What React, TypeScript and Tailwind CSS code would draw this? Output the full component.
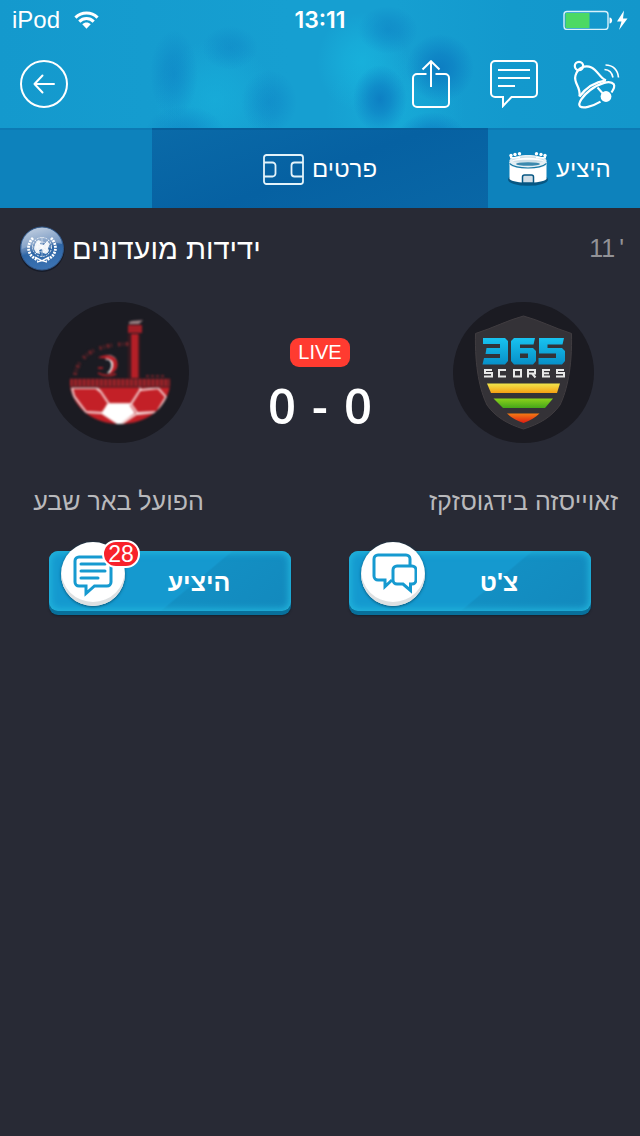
import type { ReactNode } from "react";

const SANS = "font-['Liberation_Sans',Arial,sans-serif]";

const BLOBS = [
  { cx: 215, cy: 100, rx: 60, ry: 60, fill: "url(#light)", opacity: 0.7 },
  { cx: 362, cy: 62, rx: 45, ry: 50, fill: "url(#light)", opacity: 1 },
  { cx: 395, cy: 110, rx: 70, ry: 60, fill: "url(#light)", opacity: 0.6 },
  { cx: 174, cy: 74, rx: 24, ry: 44, fill: "url(#dark)", opacity: 0.45 },
  { cx: 230, cy: 48, rx: 28, ry: 22, fill: "url(#dark)", opacity: 0.35 },
  { cx: 269, cy: 102, rx: 28, ry: 32, fill: "url(#dark)", opacity: 0.4 },
  { cx: 185, cy: 132, rx: 40, ry: 26, fill: "url(#dark)", opacity: 0.45 },
  { cx: 388, cy: 30, rx: 30, ry: 24, fill: "url(#dark)", opacity: 0.45 },
  { cx: 380, cy: 99, rx: 27, ry: 34, fill: "url(#dark)", opacity: 0.85 },
  { cx: 440, cy: 68, rx: 34, ry: 34, fill: "url(#dark)", opacity: 0.85 },
  { cx: 432, cy: 138, rx: 34, ry: 26, fill: "url(#dark)", opacity: 0.8 },
];

function HeaderBackdrop() {
  return (
    <svg
      aria-hidden="true"
      className="absolute inset-0 h-full w-full"
      viewBox="0 0 640 208"
      preserveAspectRatio="none"
    >
      <defs>
        <linearGradient id="sky" x1="0" x2="1" y1="0" y2="0">
          <stop offset="0" stopColor="#1499cd" />
          <stop offset="0.45" stopColor="#169fd1" />
          <stop offset="0.62" stopColor="#169fd1" />
          <stop offset="0.8" stopColor="#1399cd" />
          <stop offset="1" stopColor="#1397cb" />
        </linearGradient>
        <radialGradient id="light">
          <stop offset="0" stopColor="#18b0db" />
          <stop offset="0.4" stopColor="#18b0db" stopOpacity="0.7" />
          <stop offset="1" stopColor="#18b0db" stopOpacity="0" />
        </radialGradient>
        <radialGradient id="dark">
          <stop offset="0" stopColor="#0b78c0" />
          <stop offset="0.4" stopColor="#0b78c0" stopOpacity="0.7" />
          <stop offset="1" stopColor="#0b78c0" stopOpacity="0" />
        </radialGradient>
      </defs>
      <rect width="640" height="208" fill="url(#sky)" />
      {BLOBS.map((blob) => (
        <ellipse key={`${blob.cx}-${blob.cy}`} {...blob} />
      ))}
    </svg>
  );
}

function StatusBar() {
  return (
    <div className="relative grid h-10 grid-cols-3 items-center px-3 leading-6 text-white">
      <div className="flex items-center gap-3.5">
        <span className="text-[24px]">iPod</span>
        <svg className="h-[18px] w-[25px]" viewBox="0 0 26 18" aria-label="Wi-Fi">
          <g fill="none" stroke="#fff" strokeWidth="3.2">
            <path d="M1.5 6.5C8 .2 18 .2 24.500 6.5" />
            <path d="M5.5 10.6c4.2-4.1 10.800-4.100 15 0" />
          </g>
          <path d="M8.600 13.400c2.500-2.400 6.300-2.400 8.800 0L13 18z" fill="#fff" />
        </svg>
      </div>
      <time className="text-center font-['Inter','Liberation_Sans',sans-serif] text-[23px] font-semibold">
        13:11
      </time>
      <svg className="h-5 w-[65px] justify-self-end" viewBox="0 0 65 20" aria-label="Battery, charging">
        <rect x="1" y="1.500" width="44" height="18" rx="3" fill="none" stroke="#d9f1fb" strokeWidth="1.400" />
        <rect x="2.500" y="3" width="24" height="15" fill="#4cd964" />
        <path d="M46.500 7.500c3.500 0 3.500 6 0 6z" fill="#fff" />
        <path d="M61 .5 54 11.500h4.500L56 20 64.500 8.500H60z" fill="#fff" />
      </svg>
    </div>
  );
}

function BackIcon() {
  return (
    <svg className="size-12" viewBox="0 0 48 48" fill="none" stroke="#fff" strokeWidth="2" aria-hidden="true">
      <circle cx="24" cy="24" r="23" />
      <path d="M14.500 24H34M22.500 15.500 14.500 24l8 8.500" strokeLinecap="round" strokeLinejoin="round" />
    </svg>
  );
}

function ShareIcon() {
  return (
    <svg className="h-12 w-[38px]" viewBox="0 0 38 48" fill="none" stroke="#fff" strokeWidth="2" aria-hidden="true">
      <path d="M14.500 14H5a4 4 0 0 0-4 4v25a4 4 0 0 0 4 4h28a4 4 0 0 0 4-4V18a4 4 0 0 0-4-4h-9.500" />
      <path d="M19 27V1.500M10.500 9.500 19 1.200l8.500 8.300" />
    </svg>
  );
}

function CommentIcon() {
  return (
    <svg className="size-12" viewBox="0 0 48 48" fill="none" stroke="#fff" strokeWidth="2" aria-hidden="true">
      <path d="M5 1h38a4 4 0 0 1 4 4v28a4 4 0 0 1-4 4H21.500L13 46v-9H5a4 4 0 0 1-4-4V5a4 4 0 0 1 4-4z" />
      <path d="M8 10h32M8 18h32M8 26h17" />
    </svg>
  );
}

function BellIcon() {
  return (
    <svg
      className="h-12 w-[42px] overflow-visible"
      viewBox="5 0 42 48"
      fill="none"
      stroke="#fff"
      strokeWidth="2.200"
      aria-hidden="true"
    >
      <circle cx="6" cy="6" r="4.200" />
      <path d="M6.500 36.500C8 26 .2 23.500 2.500 15.500 4.500 8 12 4.500 18.500 7.500c6.500 3 8 10.500 14.500 12.800" />
      <path d="M6.500 36.500C13 27.500 21.500 22 33 20.300" />
      <path d="M38.500 32.500c2.300-3.500 3.500-6.300 2.300-8.200-3.500-4.500-14.300-1.200-23.500 5.700C9.500 36 4.500 43.500 7 46.300c2.700 2.300 11.500.7 20.500-4.700" />
      <path d="M24.500 27.500 32 36" strokeWidth="2" />
      <circle cx="33" cy="36.500" r="5.400" fill="#fff" stroke="none" />
      <path d="M31.500 9.500c4.500.2 7.500 3 8.500 8" strokeWidth="1.600" />
      <path d="M32.500 5c7.500 0 12.300 5 13 12.500" strokeWidth="1.600" />
    </svg>
  );
}

function PitchIcon() {
  return (
    <svg className="h-[31px] w-[41px]" viewBox="0 0 41 31" fill="none" stroke="#e3f3fa" strokeWidth="1.800" aria-hidden="true">
      <rect x="1" y="1" width="39" height="29" rx="2.500" />
      <path d="M1 8.500h8.500a3 3 0 0 1 3 3v8a3 3 0 0 1-3 3H1M40 8.500h-8.500a3 3 0 0 0-3 3v8a3 3 0 0 0 3 3H40" />
    </svg>
  );
}

function StadiumIcon() {
  return (
    <svg className="h-[34px] w-10" viewBox="0 0 40 34" aria-hidden="true">
      <ellipse cx="20" cy="27.500" rx="20" ry="6.300" fill="#075783" />
      <path d="M1.500 10v17C6 32 34 32 38.500 27V10z" fill="#fff" />
      <path d="M1.500 8C4 4.500 13 3 20 3s16 1.500 18.500 5v5C34 18 6 18 1.500 13z" fill="#e5eff4" />
      <ellipse cx="20" cy="8" rx="16" ry="3.500" fill="#cfe0e8" />
      <path d="M3 9.500c7-5 27-5 34 0-7-2.500-27-2.500-34 0z" fill="#fff" />
      <ellipse cx="20" cy="12" rx="12" ry="1.800" fill="#3b89ae" />
      <path d="M1.500 11.500c7 6 30 6 37 0" fill="none" stroke="#1678a4" strokeWidth="1.200" />
      <path d="M14.500 31v-6a2 2 0 0 1 2-2h7a2 2 0 0 1 2 2v6z" fill="#d3dee6" stroke="#075783" strokeWidth="1.500" />
      <g fill="#fff">
        <circle cx="3" cy="3.500" r="1.700" />
        <circle cx="7" cy="2.500" r="1.700" />
        <circle cx="11.500" cy="1.800" r="1.700" />
        <circle cx="28.500" cy="1.800" r="1.700" />
        <circle cx="33" cy="2.500" r="1.700" />
        <circle cx="37" cy="3.500" r="1.700" />
        <path d="M2 5h10v1.500H2zM28 5h10v1.500H28z" />
      </g>
    </svg>
  );
}

function UnEmblem() {
  return (
    <svg className="size-[46px]" viewBox="0 0 46 46" aria-hidden="true">
      <defs>
        <linearGradient id="un" x1="0.300" x2="0.600" y1="0" y2="1">
          <stop offset="0" stopColor="#b7c6da" />
          <stop offset="0.450" stopColor="#5b83b5" />
          <stop offset="0.550" stopColor="#2e66a6" />
          <stop offset="1" stopColor="#3c74b4" />
        </linearGradient>
      </defs>
      <circle cx="23" cy="23.500" r="22.500" fill="#171b28" />
      <circle cx="23" cy="22.500" r="21.500" fill="url(#un)" stroke="#31588a" />
      <path d="M3 17C7 4 21-1 31 3c7 3 11 9 12 15-13-4-26-1-40 5z" fill="#dfe9f5" opacity="0.250" />
      <g fill="none" stroke="#fff">
        <path d="M14 12c-7 7-6 18 5 22M32 12c7 7 6 18-5 22" strokeWidth="2.800" strokeDasharray="2 1" />
        <path d="M18 36c5-1 9-3 12-5M28 36c-5-1-9-3-12-5" strokeWidth="1.500" />
        <circle cx="23" cy="21" r="9.500" strokeWidth="0.800" strokeDasharray="2 1" />
        <circle cx="23" cy="21" r="5" strokeWidth="0.600" />
        <path d="M23 11v20M13 21h20M16 14l14 14M30 14 16 28" strokeWidth="0.500" />
      </g>
      <path d="m16 18 3-4 3 1-1 3 4 1 3-4 3 3-2 4 1 3-3 3-3-1-1-4-3 1 1 4-4-1-2-4z" fill="#fff" opacity="0.900" />
    </svg>
  );
}

function BeerShevaCrest() {
  return (
    <svg className="size-[141px]" viewBox="0 0 141 141" role="img" aria-label="הפועל באר שבע">
      <defs>
        <clipPath id="bowl">
          <path d="M22 84h100c-4 23-24 38-50 38S26 107 22 84z" />
        </clipPath>
        <filter id="crestSoft" colorInterpolationFilters="sRGB">
          <feGaussianBlur stdDeviation="0.900" />
        </filter>
      </defs>
      <circle cx="70.500" cy="70.500" r="70.500" fill="#1b1b22" />
      <g filter="url(#crestSoft)">
        <g clipPath="url(#bowl)">
          <rect x="20" y="84" width="104" height="40" fill="#c32027" />
          <path
            d="M24 86h24l5 4 8 12-7 9-16-1-12-16zM53 90l-4-4M61 102h22l9-14 18-2 8 9-9 15-19 2-7-10M38 110l16 1 18 12 18-12 20-1M93 88l-2-4"
            fill="none"
            stroke="#f5dcdc"
            strokeWidth="1.800"
          />
          <path d="M59 102h22l6 9-16 12-17-11z" fill="#fff" />
        </g>
        <path d="M22 80.500h100" stroke="#5f2026" strokeWidth="8" />
        <path d="M22 80.500h100" stroke="#a32329" strokeWidth="7" strokeDasharray="2.500 1.800" />
        <path d="M22 85h100" stroke="#5a1d23" strokeWidth="1.500" />
        <path d="M83 32h8v44h-8z" fill="#b51f27" />
        <path d="M91 32v44M81 32v44" stroke="#4a1a20" strokeWidth="1.500" />
        <path d="M80 23h14v8H80z" fill="#a31f27" />
        <path d="M81 20c4-2 9-1 14-2l-4 4H81z" fill="#9d8184" />
        <path d="M57 54c9-3 15 5 10 12-2 4-6 6-8 5 3-2 5-6 4-10-1-3-3-4-5-3z" fill="#fff" />
        <path d="M50 56c5-4 16-4 19 3 2 7-2 12-8 13 5-6 6-13 0-15-4-1-7-1-11-1z" fill="#b91f27" />
        <path d="M50 71c5 3 12 3 18 1M50 66h5" fill="none" stroke="#a02027" strokeWidth="2" />
        <path d="M27 73c2-11 9-20 20-25 10-4 20-6 34-6" fill="none" stroke="#6d2429" strokeWidth="4" strokeDasharray="2.500 2 1 2 3 1.500 1 6" />
        <path d="M98 74h18" stroke="#70242a" strokeWidth="2" strokeDasharray="3 2" />
      </g>
    </svg>
  );
}

function Scores365Crest() {
  return (
    <svg className="size-[141px]" viewBox="0 0 141 141" role="img" aria-label="365 Scores">
      <defs>
        <linearGradient id="blue" x1="0" x2="0" y1="0" y2="1">
          <stop offset="0" stopColor="#18c3f0" />
          <stop offset="1" stopColor="#078fc7" />
        </linearGradient>
        <linearGradient id="yellow" x1="0" x2="0" y1="0" y2="1">
          <stop offset="0" stopColor="#f0e64c" />
          <stop offset="1" stopColor="#f6a012" />
        </linearGradient>
        <linearGradient id="green" x1="0" x2="0" y1="0" y2="1">
          <stop offset="0" stopColor="#8bd21c" />
          <stop offset="1" stopColor="#45a61a" />
        </linearGradient>
        <linearGradient id="red" x1="0" x2="0" y1="0" y2="1">
          <stop offset="0" stopColor="#f47b14" />
          <stop offset="1" stopColor="#dc1c12" />
        </linearGradient>
      </defs>
      <circle cx="70.500" cy="70.500" r="70.500" fill="#1b1b22" />
      <path
        d="M22.500 31.500C40 26 55 18 70.500 14 86 18 101 26 118.500 31.500c.8 34-4.500 57-11.500 71.500-8.500 12-20.500 19-36.500 24-16-5-28-12-36.500-24-7-14.500-12.300-37.500-11.500-71.500z"
        fill="#343237"
        stroke="#403c40"
        strokeWidth="1"
      />
      <g fill="url(#blue)">
        <path d="M30 36h22l3 3v20l-3 3.500H29.500l1.500-6.500h16v-4H32.500l1-6H47v-4H30z" />
        <path d="M82 36l-1.500 6.500H67v3.500h13l3 3v10l-3 3.500H61l-3-3.500V39l3-3zM67 51.500V56h8v-4.500z" fillRule="evenodd" />
        <path d="M111 36l-1.500 6.500H94.500v3.500H109l3 3v10l-3 3.500H85.500V56H103v-4.500H86V36z" />
      </g>
      <g fill="none" stroke="#e8e8e8" strokeWidth="2">
        <path d="M39 68h-7v3h7v3.500h-8M53 68h-7v6.500h7M61 68h7v6.500h-7zM75 75.500V68h7v3.500h-7M79 71.500l3.500 4M97 68h-7v6.500h7M90 71.200h6M111 68h-7v3h7v3.500h-8" />
      </g>
      <path d="M34 81.500h73L104 91H38z" fill="url(#yellow)" />
      <path d="M40.500 96.500H100l-8 9.500H50z" fill="url(#green)" />
      <path d="M54 111.500h32.500c-4 4-9 7-16 9.500-7-2.500-12.500-5.500-16.500-9.500z" fill="url(#red)" />
    </svg>
  );
}

function PostsIcon() {
  return (
    <svg className="h-[46px] w-10" viewBox="0 -4 40 46" fill="none" stroke="#169ad0" strokeWidth="3" aria-hidden="true">
      <path d="M6 2h28a4 4 0 0 1 4 4v21a4 4 0 0 1-4 4H21.500L13 38.500V31H6a4 4 0 0 1-4-4V6a4 4 0 0 1 4-4z" />
      <path d="M8 9h24M8 16h24M8 23h17" strokeLinecap="round" />
    </svg>
  );
}

function ChatIcon() {
  return (
    <svg className="h-[42px] w-12" viewBox="-3 0 48 42" fill="none" stroke="#169ad0" strokeWidth="3" aria-hidden="true">
      <path d="M20 27 13 33.500V27H6a4 4 0 0 1-4-4V6a4 4 0 0 1 4-4h28a4 4 0 0 1 4 4v7" />
      <path d="M25 13h15a4 4 0 0 1 4 4v10a4 4 0 0 1-4 4h-1.500v6.500L31 31h-6a4 4 0 0 1-4-4V17a4 4 0 0 1 4-4z" />
    </svg>
  );
}

type ActionProps = { label: string; icon: ReactNode; badge?: string };

function ActionButton({ label, icon, badge }: ActionProps) {
  return (
    <button
      type="button"
      className="relative flex h-[60px] items-center justify-center rounded-[9px] bg-[linear-gradient(140deg,#1599cf_58%,#138fc3_59%,#1389bd_100%)] pt-1 pl-[58px] text-[25px] font-bold text-white shadow-[0_4px_0_#08709b,0_5px_2px_#17202c,inset_0_0_7px_2px_#22b5dc]"
    >
      <span dir="rtl">{label}</span>
      <span className="absolute -top-[9px] left-3 flex size-16 items-center justify-center rounded-full bg-white shadow-[inset_0_-4px_0_#dde0e2,0_1px_3px_#075476]">
        {icon}
      </span>
      {badge && (
        <span className="absolute -top-[11px] left-[53px] flex h-7 w-[38px] items-center justify-center rounded-full border-2 border-white bg-[#f8222b] text-[23px] leading-6 font-normal">
          {badge}
        </span>
      )}
    </button>
  );
}

function Team({ name, crest }: { name: string; crest: ReactNode }) {
  return (
    <div className="flex flex-col items-center gap-10">
      {crest}
      <h2 dir="rtl" className="text-[25px] leading-9 whitespace-nowrap text-[#b9b9bc]">
        {name}
      </h2>
    </div>
  );
}

export default function App() {
  return (
    <div className={`min-h-screen bg-[#282a35] ${SANS}`}>
      <header className="relative overflow-hidden">
        <HeaderBackdrop />
        <StatusBar />
        <div className="relative flex h-22 items-center justify-between px-5">
          <button type="button" aria-label="חזרה">
            <BackIcon />
          </button>
          <div className="flex items-center gap-10">
            <button type="button" aria-label="שיתוף">
              <ShareIcon />
            </button>
            <button type="button" aria-label="תגובות">
              <CommentIcon />
            </button>
            <button type="button" aria-label="התראות">
              <BellIcon />
            </button>
          </div>
        </div>
        <nav className="relative flex h-20 text-[24px] text-white">
          <div className="w-[152px] border-t-2 border-[#0c7ab4] bg-[#0d82bc]" />
          <a
            href="#details"
            aria-current="page"
            className="flex flex-1 items-center justify-center gap-2 border-t-2 border-[#065f9b] bg-[linear-gradient(160deg,#0a6aa8,#0661a2_50%,#0967a6)]"
          >
            <PitchIcon />
            <span dir="rtl">פרטים</span>
          </a>
          <a href="#stand" className="flex w-[152px] items-center gap-2 border-t-2 border-[#0c7ab4] bg-[#0d82bc] pl-5">
            <StadiumIcon />
            <span dir="rtl">היציע</span>
          </a>
        </nav>
      </header>

      <main>
        <div className="flex items-center justify-between pt-[18px] pr-4 pl-[19px]">
          <div className="flex items-center gap-[7px]">
            <UnEmblem />
            <h1 dir="rtl" className="text-[29px] leading-10 text-white">
              ידידות מועדונים
            </h1>
          </div>
          <span className="flex gap-1 text-[25px] text-[#929296]">
            <span>11</span>
            <span>'</span>
          </span>
        </div>

        <section className="grid grid-cols-[237fr_166fr_237fr] pt-[30px]">
          <Team name="הפועל באר שבע" crest={<BeerShevaCrest />} />
          <div className="flex flex-col items-center gap-2 pt-9 text-white">
            <span className="rounded-[9px] bg-[#ff3b30] px-2 text-[20px] leading-[29px]">LIVE</span>
            <strong className="flex gap-4 font-['Open_Sans',sans-serif] text-[49px] leading-[60px] font-semibold">
              <span>0</span>
              <span>-</span>
              <span>0</span>
            </strong>
          </div>
          <div className="pl-1">
            <Team name="זאוייסזה בידגוסזקז" crest={<Scores365Crest />} />
          </div>
        </section>

        <section className="grid grid-cols-2 gap-[58px] px-[49px] pt-8">
          <ActionButton label="היציע" icon={<PostsIcon />} badge="28" />
          <ActionButton label="צ'ט" icon={<ChatIcon />} />
        </section>
      </main>
    </div>
  );
}
